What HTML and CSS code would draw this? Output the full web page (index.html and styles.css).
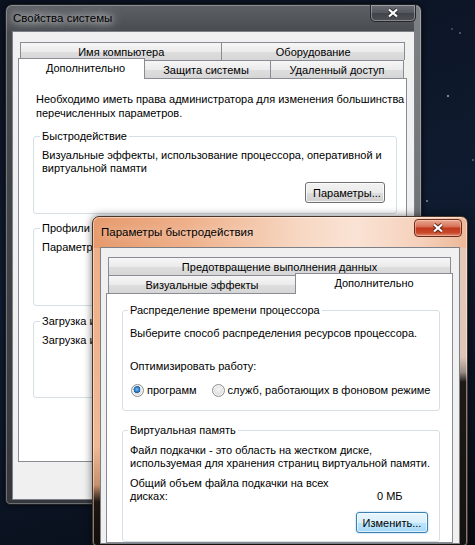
FILE: index.html
```html
<!DOCTYPE html>
<html lang="ru">
<head>
    <meta charset="UTF-8">
    <meta name="viewport" content="width=device-width, initial-scale=1.0">
    <title>Свойства системы</title>
    <link rel="stylesheet" href="styles.css">
</head>
<body>

    <!-- System properties dialog (inactive, behind) -->
    <div class="window window-back">
        <div class="titlebar">
            <span class="caption">Свойства системы</span>
            <span class="close-btn">
                <svg width="12" height="10" viewBox="0 0 12 10"><path d="M2 1.5L10 8.5M10 1.5L2 8.5" stroke="#2e3034" stroke-width="4"/><path d="M2 1.5L10 8.5M10 1.5L2 8.5" stroke="#fff" stroke-width="2.2"/></svg>
            </span>
        </div>
        <div class="client">
            <div class="tab-row">
                <div class="tab tab-name">Имя компьютера</div>
                <div class="tab tab-hw">Оборудование</div>
            </div>
            <div class="tab-row">
                <div class="tab tab-active tab-adv">Дополнительно</div>
                <div class="tab tab-protect">Защита системы</div>
                <div class="tab tab-remote">Удаленный доступ</div>
            </div>
            <div class="tab-panel sys-panel">
                <p class="note">Необходимо иметь права администратора для изменения большинства<br>перечисленных параметров.</p>

                <fieldset class="group">
                    <legend>Быстродействие</legend>
                    <p>Визуальные эффекты, использование процессора, оперативной и<br>виртуальной памяти</p>
                    <div class="group-actions"><button class="btn">Параметры...</button></div>
                </fieldset>

                <fieldset class="group group-profiles">
                    <legend>Профили пользователей</legend>
                    <p>Параметры рабочего стола</p>
                </fieldset>

                <fieldset class="group group-boot">
                    <legend>Загрузка и восстановление</legend>
                    <p>Загрузка и восстановление системы</p>
                </fieldset>
            </div>
        </div>
    </div>

    <!-- Performance options dialog (active, on top) -->
    <div class="window window-front">
        <div class="titlebar">
            <span class="caption">Параметры быстродействия</span>
            <span class="close-btn close-active">
                <svg width="12" height="10" viewBox="0 0 12 10"><path d="M2 1.5L10 8.5M10 1.5L2 8.5" stroke="#5a2418" stroke-width="4"/><path d="M2 1.5L10 8.5M10 1.5L2 8.5" stroke="#fff" stroke-width="2.2"/></svg>
            </span>
        </div>
        <div class="client">
            <div class="tab-row">
                <div class="tab tab-dep">Предотвращение выполнения данных</div>
            </div>
            <div class="tab-row">
                <div class="tab tab-visual">Визуальные эффекты</div>
                <div class="tab tab-active tab-extra">Дополнительно</div>
            </div>
            <div class="tab-panel perf-panel">
                <fieldset class="group group-cpu">
                    <legend>Распределение времени процессора</legend>
                    <p>Выберите способ распределения ресурсов процессора.</p>
                    <p class="optimize">Оптимизировать работу:</p>
                    <div class="radio-row">
                        <label class="radio"><input type="radio" name="cpu" checked> программ</label>
                        <label class="radio"><input type="radio" name="cpu"> служб, работающих в фоновом режиме</label>
                    </div>
                </fieldset>

                <fieldset class="group group-vm">
                    <legend>Виртуальная память</legend>
                    <p>Файл подкачки - это область на жестком диске,<br>используемая для хранения страниц виртуальной памяти.</p>
                    <div class="vm-total">
                        <span class="vm-label">Общий объем файла подкачки на всех дисках:</span>
                        <span class="vm-value">0 МБ</span>
                    </div>
                    <div class="group-actions"><button class="btn btn-default">Изменить...</button></div>
                </fieldset>
            </div>
        </div>
    </div>

</body>
</html>
```

FILE: styles.css
```css
* {
    box-sizing: border-box;
}

body {
    margin: 0;
    width: 475px;
    height: 545px;
    overflow: hidden;
    position: relative;
    font-family: "Liberation Sans", Arial, sans-serif;
    font-size: 11px;
    color: #000;
    /* night sky wallpaper with a few stars */
    background:
        radial-gradient(circle at 448px 96px, rgba(230, 238, 255, 0.9) 0, rgba(230, 238, 255, 0) 1.6px),
        radial-gradient(circle at 427px 201px, rgba(230, 238, 255, 0.8) 0, rgba(230, 238, 255, 0) 1.4px),
        radial-gradient(circle at 460px 33px, rgba(230, 238, 255, 0.6) 0, rgba(230, 238, 255, 0) 1.3px),
        radial-gradient(circle at 452px 29px, rgba(230, 238, 255, 0.5) 0, rgba(230, 238, 255, 0) 1.2px),
        radial-gradient(circle at 473px 160px, rgba(230, 238, 255, 0.6) 0, rgba(230, 238, 255, 0) 1.3px),
        linear-gradient(165deg, #0b1220 0%, #0f1b30 45%, #0c1628 70%, #070b12 100%);
}

p {
    margin: 0;
}

/* ---------- window chrome ---------- */

.window {
    position: absolute;
    display: flex;
    flex-direction: column;
    border: 1px solid #1c1e22;
    border-radius: 7px 7px 5px 5px;
}

.window-back {
    left: 5px;
    top: 4px;
    width: 417px;
    height: 501px;
    padding: 0 6px 4px;
    background:
        linear-gradient(to bottom, #7d8085 0, #6a6d71 60%, #4c4f53 100%) right top / 7px 100% no-repeat,
        linear-gradient(to bottom, #5d6166 0, #474b50 28px, #3d4045 60%, #34373b 100%);
    box-shadow: inset 0 0 0 1px rgba(255, 255, 255, 0.28), 0 0 5px rgba(0, 0, 0, 0.7);
}

.window-front {
    left: 92px;
    top: 216px;
    width: 376px;
    height: 331px;
    padding: 0 7px 6px;
    border-color: #4a3528;
    background:
        linear-gradient(to right, #e69a6c 0, #eeb08a 25%, #f7d7c2 55%, #fae3d5 70%, #f5d0ba 88%, #ecb898 100%) top / 100% 31px no-repeat,
        linear-gradient(to bottom, #e8cbb8 0, #ddc6b8 140px, #9a8d85 155px, #1c1916 165px, #141210 100%) right top / 8px 100% no-repeat,
        linear-gradient(to bottom, #eeae86 0, #f0b994 230px, #c7906e 268px, #1c1510 285px, #120e0b 100%);
    box-shadow: inset 0 0 0 1px rgba(255, 255, 255, 0.45), 0 0 9px rgba(0, 0, 0, 0.55);
}

.titlebar {
    display: flex;
    justify-content: space-between;
    align-items: flex-start;
    flex-shrink: 0;
}

.window-back .titlebar {
    height: 26px;
}

.window-front .titlebar {
    height: 30px;
}

.caption {
    padding-left: 1px;
    font-size: 11.5px;
    white-space: nowrap;
}

.window-back .caption {
    line-height: 26px;
    text-shadow: 0 0 6px rgba(255, 255, 255, 0.9), 0 0 12px rgba(255, 255, 255, 0.7), 0 0 18px rgba(255, 255, 255, 0.5);
}

.window-front .caption {
    line-height: 30px;
    text-shadow: 0 0 8px rgba(255, 255, 255, 0.6);
}

.close-btn {
    display: flex;
    align-items: center;
    justify-content: center;
    width: 46px;
    height: 17px;
    margin-right: -1px;
    border: 1px solid #25272b;
    border-top: none;
    border-radius: 0 0 5px 5px;
    background: linear-gradient(to bottom, #6b6f75 0, #54585e 48%, #41454a 52%, #4d5157 100%);
    box-shadow: inset 0 0 0 1px rgba(255, 255, 255, 0.32);
}

.close-active {
    width: 48px;
    height: 18px;
    margin-top: 2px;
    margin-right: -2px;
    border: 1px solid #6b2b1d;
    border-radius: 4px;
    background: linear-gradient(to bottom, #e9a892 0, #d8735b 40%, #c23a1e 52%, #c8462a 78%, #e08a6c 100%);
    box-shadow: inset 0 0 0 1px rgba(255, 220, 200, 0.45);
}

/* ---------- client area ---------- */

.client {
    flex: 1;
    display: flex;
    flex-direction: column;
    background: #f0f0f0;
    border: 1px solid #7d8086;
}

.window-back .client {
    padding: 10px 7px 0 5px;
}

.window-front .client {
    padding: 9px 6px 0 5px;
}

/* ---------- tabs ---------- */

.tab-row {
    display: flex;
    height: 18px;
    margin: 0 2px;
}

.tab {
    display: flex;
    align-items: center;
    justify-content: center;
    border: 1px solid #898c95;
    border-bottom: none;
    background: linear-gradient(to bottom, #f6f6f6 0, #ebebeb 50%, #dedede 51%, #d6d6d6 100%);
    white-space: nowrap;
}

.tab + .tab {
    margin-left: -1px;
}

.tab-active {
    position: relative;
    z-index: 1;
    height: 21px;
    margin: -2px -2px 0 -2px;
    background: #fff;
    padding-bottom: 2px;
}

.tab-active + .tab {
    margin-left: -2px;
}

.tab-name { width: 203px; }
.tab-hw { width: 184px; }
.tab-adv { width: 127px; padding-left: 8px; }
.tab-protect { width: 130px; }
.tab-remote { width: 134px; }

.tab-dep { width: 100%; }
.tab-visual { width: 188px; }
.tab-extra { flex: 1; margin-right: -2px; }

.tab-panel {
    background: #fff;
    border: 1px solid #898c95;
}

.sys-panel {
    height: 384px;
}

.perf-panel {
    flex: 1;
}

.note {
    padding: 13px 0 0 17px;
    line-height: 14px;
}

/* ---------- group boxes ---------- */

.group {
    margin: 9px 9px 0 14px;
    padding: 0 11px 10px 8px;
    border: 1px solid #d5dfe5;
    border-radius: 3px;
    min-width: 0;
}

.group legend {
    padding: 0 2px;
    margin-left: -2px;
    line-height: 14px;
}

.group p {
    margin-top: 6px;
    line-height: 13px;
    white-space: nowrap;
}

.group-actions {
    display: flex;
    justify-content: flex-end;
    margin-top: 7px;
}

.group-profiles {
    margin-top: 7px;
    padding-bottom: 51px;
}

.group-boot {
    margin-top: 8px;
    padding-bottom: 50px;
}

/* ---------- buttons ---------- */

.btn {
    height: 21px;
    padding: 0 7px;
    font-family: inherit;
    font-size: 11px;
    color: #000;
    border: 1px solid #707070;
    border-radius: 3px;
    background: linear-gradient(to bottom, #f2f2f2 0, #ebebeb 50%, #dddddd 51%, #cfcfcf 100%);
    box-shadow: inset 0 0 0 1px rgba(255, 255, 255, 0.75);
}

.sys-panel .group .btn {
    width: 80px;
}

.btn-default {
    width: 72px;
    padding: 0 4px;
    border-color: #3c7fb1;
    background: linear-gradient(to bottom, #eaf6fd 0, #d9f0fc 50%, #bee6fd 51%, #a7d9f5 100%);
    box-shadow: inset 0 0 0 1px rgba(255, 255, 255, 0.6), 0 0 2px rgba(60, 160, 230, 0.6);
}

/* ---------- performance options ---------- */

.group-cpu {
    margin: 9px 12px 0 15px;
    padding: 0 11px 13px 7px;
}

.group-cpu p {
    margin-top: 10px;
}

.group-cpu .optimize {
    margin-top: 20px;
}

.radio-row {
    display: flex;
    align-items: center;
    gap: 15px;
    height: 13px;
    margin: 11px 0 0 1px;
}

.radio {
    display: flex;
    align-items: center;
    gap: 3px;
    white-space: nowrap;
    line-height: 13px;
}

.radio input {
    appearance: none;
    width: 13px;
    height: 13px;
    margin: 0;
    border: 1px solid #8e8f8f;
    border-radius: 50%;
    background: radial-gradient(circle at 50% 40%, #f4f4f4 0, #dcdcdc 70%, #cfcfcf 100%);
    box-shadow: inset 0 0 0 1px #f7f7f7;
}

.radio input:checked {
    background:
        radial-gradient(circle at 45% 40%, #7ec4f0 0, #2f80c7 2.2px, #1c5a9c 3.4px, rgba(0, 0, 0, 0) 3.6px),
        radial-gradient(circle at 50% 40%, #f4f4f4 0, #dcdcdc 70%, #cfcfcf 100%);
}

.group-vm {
    margin: 12px 12px 0 15px;
    padding: 0 11px 8px 7px;
}

.group-vm p {
    margin-top: 7px;
}

.vm-total {
    display: flex;
    align-items: flex-end;
    margin-top: 7px;
    line-height: 13px;
}

.vm-label {
    width: 205px;
}

.vm-value {
    margin-left: 42px;
}

.group-vm .group-actions {
    margin-top: 9px;
}
```
